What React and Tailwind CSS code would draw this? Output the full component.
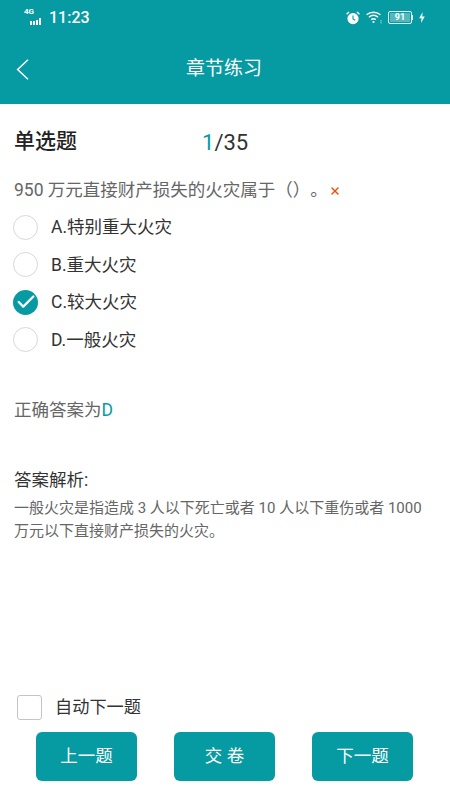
import React from "react";
import { Check, X } from "lucide-react";

const FONT = "font-['Roboto','Noto_Sans_CJK_SC',sans-serif] [text-spacing-trim:space-all]";

const options = [
  { id: "A", text: "A.特别重大火灾" },
  { id: "B", text: "B.重大火灾" },
  { id: "C", text: "C.较大火灾", checked: true },
  { id: "D", text: "D.一般火灾" },
];

const SignalIcon = () => (
  <div className="relative w-[21px] h-[14px] mt-[-1px]">
    <span className="absolute left-0 top-[-2px] text-[8px] leading-[8px] font-bold text-white">4G</span>
    <div className="absolute left-[6px] bottom-[-1px] flex items-end gap-[1px]">
      <span className="w-[2px] h-[4px] bg-white" />
      <span className="w-[2px] h-[4px] bg-white" />
      <span className="w-[2px] h-[5px] bg-white" />
      <span className="w-[2px] h-[7px] bg-white" />
    </div>
  </div>
);

const AlarmIcon = () => (
  <svg width="14" height="14" viewBox="0 0 14 14" fill="none">
    <circle cx="7" cy="7.6" r="5.6" fill="#fff" />
    <path d="M7 4.6V8l2.2 1.2" stroke="#069aa3" strokeWidth="1.1" />
    <path d="M0.6 3.2 3 1M13.4 3.2 11 1" stroke="#fff" strokeWidth="1.5" />
  </svg>
);

const WifiIcon = () => (
  <svg width="16" height="13" viewBox="0 0 16 13" fill="none" stroke="#fff">
    <path d="M0.6 3.8C4.6 0.4 10.4 0.4 14.4 3.8" strokeWidth="1.4" />
    <path d="M2.9 6.2C5.6 4 9.4 4 12.1 6.2" strokeWidth="1.4" />
    <path d="M5.2 8.6C6.6 7.5 8.4 7.5 9.8 8.6" strokeWidth="1.4" />
    <circle cx="7.5" cy="11" r="1.1" fill="#fff" stroke="none" />
    <path d="M15 9.5v0.8M15 11.5v0.8" strokeWidth="1.2" />
  </svg>
);

const Battery = () => (
  <div className="flex items-center">
    <div className="w-[24px] h-[13px] border border-white/90 rounded-[2px] p-[1px]">
      <div className="h-full bg-white/30 flex items-center justify-center text-[9px] leading-none font-bold text-white">
        91
      </div>
    </div>
    <span className="w-[1px] h-[5px] bg-white/90" />
  </div>
);

const BoltIcon = () => (
  <svg width="6" height="11" viewBox="0 0 6 11" fill="#fff">
    <path d="M3.6 0 0.2 6.2H2.6L2 11 5.8 4.4H3.2Z" />
  </svg>
);

const App = () => {
  return (
    <div className={`w-[450px] h-[800px] flex flex-col bg-white overflow-hidden ${FONT}`}>
      {/* Header */}
      <div className="h-[104px] shrink-0 bg-[#069aa3] flex flex-col">
        <div className="h-[34px] flex items-center justify-between pl-[24px] pr-[25px] pt-[1px] text-white">
          <div className="flex items-center gap-[4px]">
            <SignalIcon />
            <span className="text-[16px] leading-none font-medium">11:23</span>
          </div>
          <div className="flex items-center gap-[6px]">
            <AlarmIcon />
            <WifiIcon />
            <Battery />
            <BoltIcon />
          </div>
        </div>
        <div className="relative flex-1 flex items-center justify-center pr-[2px]">
          <svg
            width="13"
            height="21"
            viewBox="0 0 13 21"
            fill="none"
            stroke="#fff"
            strokeWidth="1.5"
            className="absolute left-[16px] top-[25px]"
          >
            <path d="M12 0.7 1.6 10.5 12 20.3" />
          </svg>
          <span className="text-[19px] text-white">章节练习</span>
        </div>
      </div>

      {/* Question */}
      <div className="flex-1 flex flex-col">
        <div className="flex items-center h-[30px] mt-[23px] pl-[14px]">
          <span className="w-[188px] text-[21px] font-medium text-[#222]">单选题</span>
          <span className="text-[22px] text-[#333]">
            <span className="text-[#069aa3]">1</span>/35
          </span>
        </div>

        <div className="flex items-center h-[24px] mt-[21px] pl-[14px] text-[17.5px] text-[#666]">
          <span>950 万元直接财产损失的火灾属于（）。</span>
          <X size={12} strokeWidth={3} className="ml-[1px] mt-[1px] text-[#f0500f]" />
        </div>

        <div className="mt-[6.5px] pl-[13px] flex flex-col">
          {options.map((opt) => (
            <div key={opt.id} className="h-[37.5px] flex items-center gap-[13px]">
              {opt.checked ? (
                <span className="w-[25px] h-[25px] rounded-full bg-[#069aa3] flex items-center justify-center">
                  <Check size={22} strokeWidth={2.5} className="text-white" />
                </span>
              ) : (
                <span className="w-[25px] h-[25px] rounded-full border border-[#d8d8d8]" />
              )}
              <span className="text-[17.5px] text-[#333]">{opt.text}</span>
            </div>
          ))}
        </div>

        <div className="mt-[39.5px] pl-[14px] h-[24px] flex items-center text-[17.5px] text-[#666]">
          正确答案为<span className="text-[#069aa3]">D</span>
        </div>

        <div className="mt-[46px] pl-[14px] h-[24px] flex items-center text-[17.5px] text-[#333]">
          答案解析:
        </div>
        <p className="mt-[5px] px-[14px] text-[15px] leading-[23px] text-[#666]">
          一般火灾是指造成 3 人以下死亡或者 10 人以下重伤或者 1000 万元以下直接财产损失的火灾。
        </p>
      </div>

      {/* Footer */}
      <div className="shrink-0 pl-[17px] flex items-center gap-[13px] h-[24px]">
        <span className="w-[25px] h-[25px] rounded-[3px] border border-[#c4c4c4]" />
        <span className="mt-[1px] text-[17.2px] text-[#333]">自动下一题</span>
      </div>
      <div className="shrink-0 mt-[13px] mb-[19px] pl-[36px] pr-[37px] flex justify-between">
        <button className="w-[101px] h-[49px] rounded-[6px] bg-[#069aa3] text-white text-[17.5px]">上一题</button>
        <button className="w-[101px] h-[49px] rounded-[6px] bg-[#069aa3] text-white text-[17.5px]">交 卷</button>
        <button className="w-[101px] h-[49px] rounded-[6px] bg-[#069aa3] text-white text-[17.5px]">下一题</button>
      </div>
    </div>
  );
};

export default App;
